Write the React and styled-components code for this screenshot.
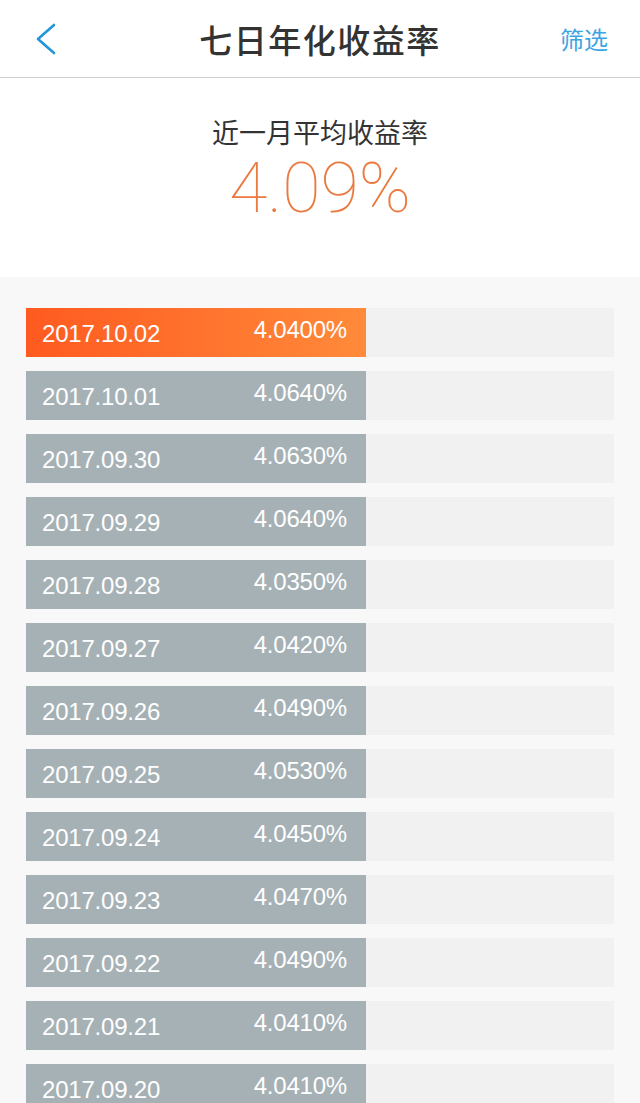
import styled, { createGlobalStyle } from 'styled-components';

const GlobalStyle = createGlobalStyle`
  html, body {
    margin: 0;
    padding: 0;
    background: #f8f8f8;
    font-family: "Liberation Sans", "Noto Sans CJK SC", sans-serif;
  }
`;

const Page = styled.div`
  width: 640px;
  min-height: 1103px;
  background: #f8f8f8;
  overflow: hidden;
`;

const NavBar = styled.div`
  height: 77px;
  background: #fff;
  border-bottom: 1px solid #cfcfcf;
  display: grid;
  grid-template-columns: 100px 1fr 100px;
  align-items: center;
`;

const BackButton = styled.div`
  padding-left: 34px;
  display: flex;
  align-items: center;
`;

const Title = styled.div`
  text-align: center;
  font-size: 33px;
  color: #333;
  font-family: "Noto Sans CJK SC", sans-serif;
  font-weight: 500;
  letter-spacing: 1.5px;
`;

const FilterLink = styled.div`
  text-align: right;
  padding-right: 32px;
  font-size: 24px;
  color: #3ba5e2;
  font-family: "Noto Sans CJK SC", sans-serif;
`;

const Summary = styled.div`
  background: #fff;
  height: 199px;
  display: flex;
  flex-direction: column;
  align-items: center;
  padding-top: 34px;
  box-sizing: border-box;
`;

const SummaryLabel = styled.div`
  font-size: 27px;
  color: #333;
  font-family: "Noto Sans CJK SC", sans-serif;
  line-height: 40px;
`;

const SummaryValue = styled.div`
  font-size: 70px;
  color: #ea7a40;
  font-family: Roboto, "Liberation Sans", sans-serif;
  font-weight: 100;
  line-height: 84px;
  margin-top: -6px;
`;

const List = styled.div`
  padding: 31px 26px 0;
  display: flex;
  flex-direction: column;
  gap: 14px;
`;

const Track = styled.div`
  height: 49px;
  background: #f1f1f1;
  display: flex;
`;

const Bar = styled.div`
  width: 340px;
  height: 100%;
  background: ${(p) =>
    p.$latest ? 'linear-gradient(90deg, #ff5a20 0%, #ff8a3a 100%)' : '#a6b1b5'};
  display: flex;
  align-items: center;
  justify-content: space-between;
  padding: 0 19px 0 16px;
  box-sizing: border-box;
  color: #fff;
  font-size: 24px;
  letter-spacing: -0.2px;
`;

const DateText = styled.span`
  padding-top: 2px;
`;

const RateText = styled.span`
  padding-bottom: 6px;
`;

const rows = [
  ['2017.10.02', '4.0400%'],
  ['2017.10.01', '4.0640%'],
  ['2017.09.30', '4.0630%'],
  ['2017.09.29', '4.0640%'],
  ['2017.09.28', '4.0350%'],
  ['2017.09.27', '4.0420%'],
  ['2017.09.26', '4.0490%'],
  ['2017.09.25', '4.0530%'],
  ['2017.09.24', '4.0450%'],
  ['2017.09.23', '4.0470%'],
  ['2017.09.22', '4.0490%'],
  ['2017.09.21', '4.0410%'],
  ['2017.09.20', '4.0410%'],
];

export default function App() {
  return (
    <Page>
      <GlobalStyle />
      <NavBar>
        <BackButton>
          <svg width="24" height="34" viewBox="0 0 24 34">
            <path d="M20 3 L4 17 L20 31" fill="none" stroke="#2196d8" strokeWidth="2.6" strokeLinecap="round" strokeLinejoin="round" />
          </svg>
        </BackButton>
        <Title>七日年化收益率</Title>
        <FilterLink>筛选</FilterLink>
      </NavBar>
      <Summary>
        <SummaryLabel>近一月平均收益率</SummaryLabel>
        <SummaryValue>4.09%</SummaryValue>
      </Summary>
      <List>
        {rows.map(([date, rate], i) => (
          <Track key={date}>
            <Bar $latest={i === 0}>
              <DateText>{date}</DateText>
              <RateText>{rate}</RateText>
            </Bar>
          </Track>
        ))}
      </List>
    </Page>
  );
}
